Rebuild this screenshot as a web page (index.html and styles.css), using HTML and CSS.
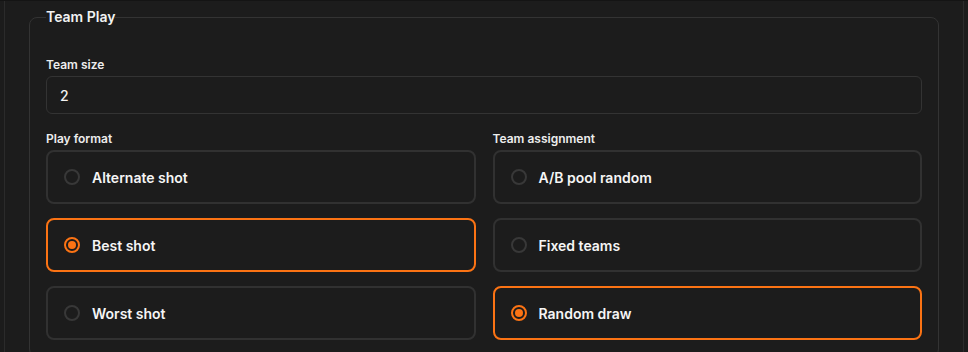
FILE: index.html
```html
<!DOCTYPE html>
<html lang="en">
  <head>
    <meta charset="UTF-8" />
    <meta name="viewport" content="width=device-width, initial-scale=1.0" />
    <title>Team Play</title>
    <link rel="stylesheet" href="styles.css">
  </head>
  <body>
    <div class="panel">
      <fieldset class="group">
        <legend>Team Play</legend>
        <div class="field">
          <label class="label" for="team-size">Team size</label>
          <input class="input" id="team-size" type="text" value="2" />
        </div>
        <div class="columns">
          <div class="field">
            <div class="label">Play format</div>
            <div class="options">
              <label class="option">
                <input class="radio" type="radio" name="format" />
                <span>Alternate shot</span>
              </label>
              <label class="option selected">
                <input class="radio" type="radio" name="format" checked />
                <span>Best shot</span>
              </label>
              <label class="option">
                <input class="radio" type="radio" name="format" />
                <span>Worst shot</span>
              </label>
            </div>
          </div>
          <div class="field">
            <div class="label">Team assignment</div>
            <div class="options">
              <label class="option">
                <input class="radio" type="radio" name="assign" />
                <span>A/B pool random</span>
              </label>
              <label class="option">
                <input class="radio" type="radio" name="assign" />
                <span>Fixed teams</span>
              </label>
              <label class="option selected">
                <input class="radio" type="radio" name="assign" checked />
                <span>Random draw</span>
              </label>
            </div>
          </div>
        </div>
      </fieldset>
    </div>
  </body>
</html>
```

FILE: styles.css
```css
* {
  box-sizing: border-box;
}
body {
  margin: 0;
  background: #1c1c1c;
  border-top: 1px solid #141414;
  color: #f2f2f2;
  font-family: Inter, "Noto Sans", sans-serif;
}
.panel {
  margin: 0 4px;
  padding: 6px 24px 0;
  min-height: 351px;
  border-left: 1px solid #2b2b2b;
  border-right: 1px solid #2b2b2b;
}
.group {
  margin: 0;
  padding: 30px 16px 16px;
  border: 1px solid #333;
  border-radius: 8px;
}
.group legend {
  padding: 0;
  font-size: 14px;
  font-weight: 600;
  line-height: 20px;
  color: #f2f2f2;
}
.label {
  display: block;
  margin-bottom: 3px;
  font-size: 12px;
  font-weight: 600;
  line-height: 16px;
  color: #ededed;
}
.input {
  display: block;
  width: 100%;
  height: 38px;
  padding: 0 13px;
  background: #1c1c1c;
  border: 1px solid #333;
  border-radius: 6px;
  color: #f2f2f2;
  font-family: inherit;
  font-size: 14px;
  font-weight: 500;
  outline: none;
}
.columns {
  display: grid;
  grid-template-columns: 1fr 1fr;
  column-gap: 17px;
  margin-top: 17px;
}
.options {
  display: flex;
  flex-direction: column;
  gap: 14px;
}
.option {
  display: flex;
  align-items: center;
  gap: 12px;
  height: 54px;
  padding: 0 16px;
  border: 2px solid #313131;
  border-radius: 8px;
  font-size: 14px;
  font-weight: 600;
  color: #f5f5f5;
  cursor: pointer;
}
.option.selected {
  border-color: #fb7314;
}
.radio {
  appearance: none;
  position: relative;
  flex: none;
  width: 16px;
  height: 16px;
  margin: 0;
  border: 2px solid #383838;
  border-radius: 50%;
}
.radio:checked {
  border-color: #fb7314;
}
.radio:checked::after {
  content: "";
  position: absolute;
  top: 2px;
  left: 2px;
  width: 8px;
  height: 8px;
  border-radius: 50%;
  background: #fb7314;
}
```
